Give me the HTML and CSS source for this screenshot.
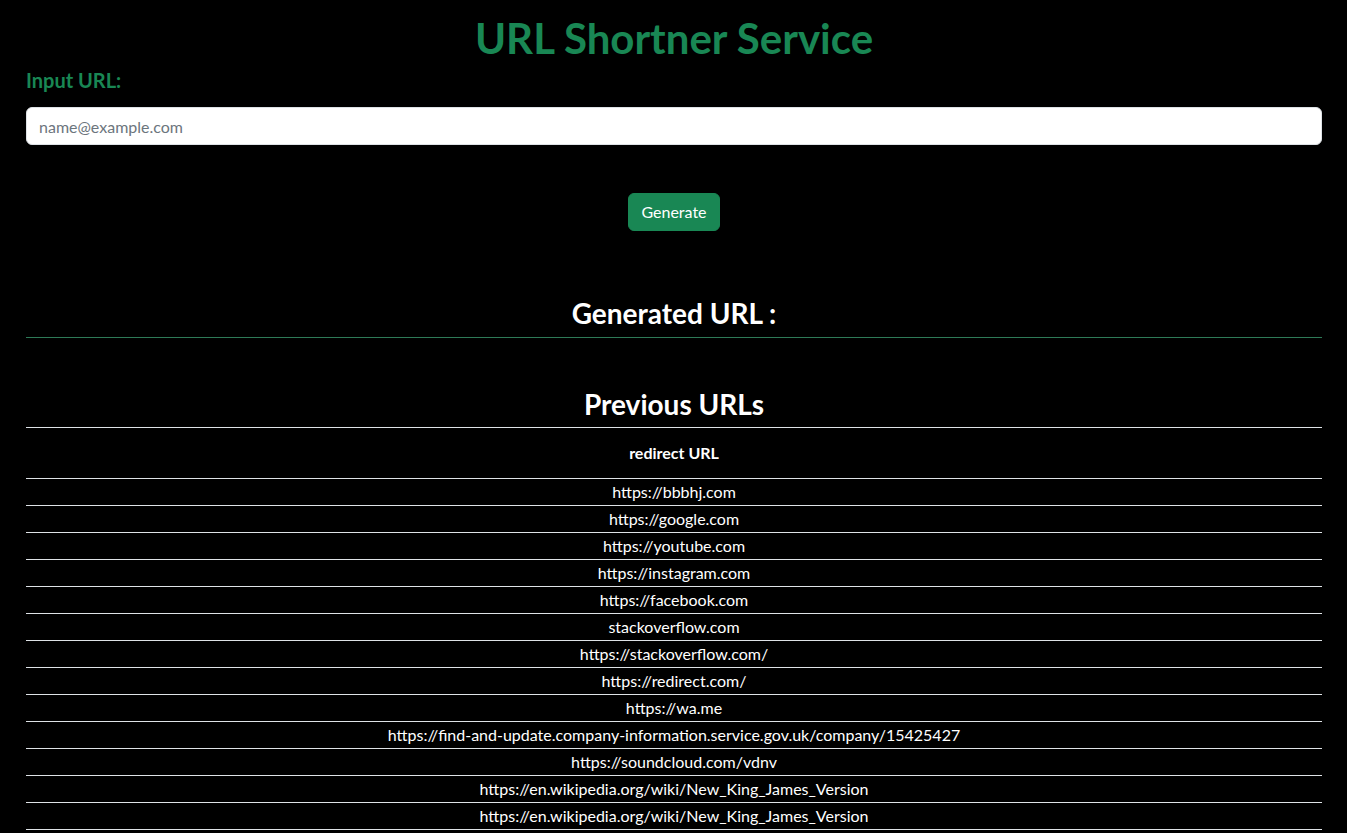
FILE: index.html
```html
<!DOCTYPE html>
<html lang="en">
<head>
<meta charset="utf-8">
<title>URL Shortner Service</title>
<link rel="stylesheet" href="styles.css">
</head>
<body>
<div class="container">
  <h1 class="title">URL Shortner Service</h1>
  <label class="label" for="url">Input URL:</label>
  <input class="input" id="url" type="text" placeholder="name@example.com">
  <div class="actions">
    <button class="btn" type="button">Generate</button>
  </div>
  <h3 class="generated">Generated URL :</h3>
  <hr class="divider">
  <h3 class="previous">Previous URLs</h3>
  <table class="urls">
    <thead>
      <tr><th>redirect URL</th></tr>
    </thead>
    <tbody>
      <tr><td>https://bbbhj.com</td></tr>
      <tr><td>https://google.com</td></tr>
      <tr><td>https://youtube.com</td></tr>
      <tr><td>https://instagram.com</td></tr>
      <tr><td>https://facebook.com</td></tr>
      <tr><td>stackoverflow.com</td></tr>
      <tr><td>https://stackoverflow.com/</td></tr>
      <tr><td>https://redirect.com/</td></tr>
      <tr><td>https://wa.me</td></tr>
      <tr><td>https://find-and-update.company-information.service.gov.uk/company/15425427</td></tr>
      <tr><td>https://soundcloud.com/vdnv</td></tr>
      <tr><td>https://en.wikipedia.org/wiki/New_King_James_Version</td></tr>
      <tr><td>https://en.wikipedia.org/wiki/New_King_James_Version</td></tr>
    </tbody>
  </table>
</div>
</body>
</html>
```
FILE: styles.css
```css
* { box-sizing: border-box; }
html, body {
  margin: 0;
  background: #000;
  color: #fff;
  font-family: Lato, "Noto Sans", "Liberation Sans", sans-serif;
  font-size: 16px;
  line-height: 1.5;
}
.container {
  padding: 0 25px 0 26px;
}
.title {
  margin: 0;
  padding-top: 14px;
  font-size: 42px;
  line-height: 48px;
  font-weight: 700;
  color: #198754;
  text-align: center;
}
.label {
  display: block;
  margin-top: 6px;
  font-size: 20px;
  line-height: 24px;
  font-weight: 700;
  color: #198754;
}
.input {
  display: block;
  width: 100%;
  height: 38px;
  margin-top: 15px;
  padding: 6px 12px;
  font-family: inherit;
  font-size: 16px;
  line-height: 24px;
  color: #212529;
  background: #fff;
  border: 1px solid #dee2e6;
  border-radius: 6px;
  outline: none;
}
.input::placeholder { color: #6c757d; }
.actions {
  display: flex;
  justify-content: center;
  margin-top: 48px;
}
.btn {
  height: 38px;
  padding: 6px 12px;
  font-family: inherit;
  font-size: 16px;
  line-height: 24px;
  color: #fff;
  background: #198754;
  border: 1px solid #198754;
  border-radius: 6px;
}
.generated {
  margin: 64px 0 0;
  font-size: 28px;
  line-height: 36px;
  font-weight: 700;
  text-align: center;
}
.divider {
  margin: 6px 0 0;
  border: 0;
  border-top: 1px solid #2e7a57;
}
.previous {
  margin: 48px 0 0;
  font-size: 28px;
  line-height: 36px;
  font-weight: 700;
  text-align: center;
}
.urls {
  width: 100%;
  margin-top: 5px;
  border-collapse: collapse;
}
.urls th {
  height: 51px;
  padding: 0;
  font-size: 16px;
  font-weight: 700;
  text-align: center;
  border-top: 1px solid #dee2e6;
  border-bottom: 1px solid #dee2e6;
  vertical-align: middle;
}
.urls td {
  padding: 1px 0 1px;
  line-height: 24px;
  text-align: center;
  border-bottom: 1px solid #dee2e6;
}
```
